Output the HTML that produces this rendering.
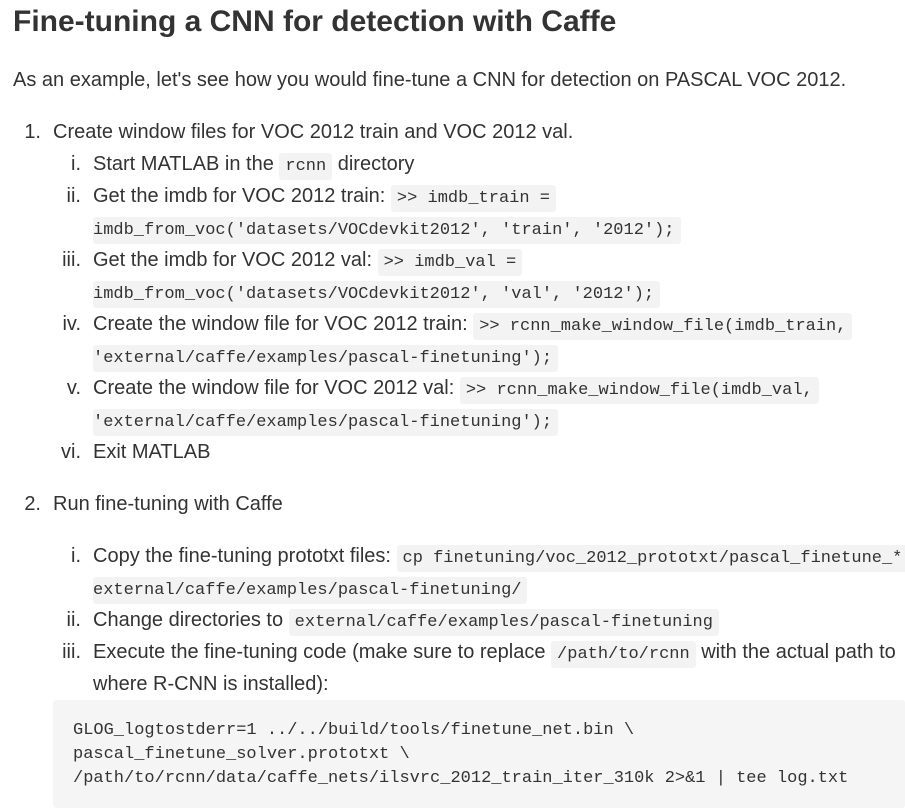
<!DOCTYPE html>
<html><head><meta charset="utf-8"><style>
body{margin:0;background:#fff;width:905px;height:810px;overflow:hidden;position:relative;font-family:"Liberation Sans",sans-serif;color:#333;font-size:20px}
.l{position:absolute;line-height:32px;white-space:nowrap}
.m{position:absolute;line-height:32px;text-align:right;width:41px}
code{font-family:"Liberation Mono",monospace;font-size:17px;background:#f3f3f3;padding:4px 6px;border-radius:3px}
h1{position:absolute;left:13px;top:2px;margin:0;font-size:30px;line-height:40px;font-weight:bold}
pre{position:absolute;left:53px;top:700px;width:852px;height:108px;margin:0;background:#f5f5f5;font-family:"Liberation Mono",monospace;font-size:17px;line-height:24px;padding:19px 20px;box-sizing:border-box;border-radius:3px}
</style></head><body>
<h1>Fine-tuning a CNN for detection with Caffe</h1>
<div class="l" style="left:13px;top:64px">As an example, let's see how you would fine-tune a CNN for detection on PASCAL VOC 2012.</div>

<div class="m" style="left:0;top:116px">1.</div>
<div class="l" style="left:53px;top:116px">Create window files for VOC 2012 train and VOC 2012 val.</div>
<div class="m" style="left:40px;top:148px">i.</div>
<div class="l" style="left:93px;top:148px">Start MATLAB in the <code>rcnn</code> directory</div>
<div class="m" style="left:40px;top:180px">ii.</div>
<div class="l" style="left:93px;top:180px">Get the imdb for VOC 2012 train: <code>&gt;&gt; imdb_train =</code></div>
<div class="l" style="left:93px;top:212px"><code style="padding-left:0">imdb_from_voc('datasets/VOCdevkit2012', 'train', '2012');</code></div>
<div class="m" style="left:40px;top:244px">iii.</div>
<div class="l" style="left:93px;top:244px">Get the imdb for VOC 2012 val: <code>&gt;&gt; imdb_val =</code></div>
<div class="l" style="left:93px;top:276px"><code style="padding-left:0">imdb_from_voc('datasets/VOCdevkit2012', 'val', '2012');</code></div>
<div class="m" style="left:40px;top:308px">iv.</div>
<div class="l" style="left:93px;top:308px">Create the window file for VOC 2012 train: <code>&gt;&gt; rcnn_make_window_file(imdb_train,</code></div>
<div class="l" style="left:93px;top:340px"><code style="padding-left:0">'external/caffe/examples/pascal-finetuning');</code></div>
<div class="m" style="left:40px;top:372px">v.</div>
<div class="l" style="left:93px;top:372px">Create the window file for VOC 2012 val: <code>&gt;&gt; rcnn_make_window_file(imdb_val,</code></div>
<div class="l" style="left:93px;top:404px"><code style="padding-left:0">'external/caffe/examples/pascal-finetuning');</code></div>
<div class="m" style="left:40px;top:436px">vi.</div>
<div class="l" style="left:93px;top:436px">Exit MATLAB</div>

<div class="m" style="left:0;top:488px">2.</div>
<div class="l" style="left:53px;top:488px">Run fine-tuning with Caffe</div>
<div class="m" style="left:40px;top:540px">i.</div>
<div class="l" style="left:93px;top:540px">Copy the fine-tuning prototxt files: <code>cp finetuning/voc_2012_prototxt/pascal_finetune_*</code></div>
<div class="l" style="left:93px;top:572px"><code style="padding-left:0">external/caffe/examples/pascal-finetuning/</code></div>
<div class="m" style="left:40px;top:604px">ii.</div>
<div class="l" style="left:93px;top:604px">Change directories to <code>external/caffe/examples/pascal-finetuning</code></div>
<div class="m" style="left:40px;top:636px">iii.</div>
<div class="l" style="left:93px;top:636px">Execute the fine-tuning code (make sure to replace <code>/path/to/rcnn</code> with the actual path to</div>
<div class="l" style="left:93px;top:668px">where R-CNN is installed):</div>
<pre>GLOG_logtostderr=1 ../../build/tools/finetune_net.bin \
pascal_finetune_solver.prototxt \
/path/to/rcnn/data/caffe_nets/ilsvrc_2012_train_iter_310k 2&gt;&amp;1 | tee log.txt</pre>
</body></html>
